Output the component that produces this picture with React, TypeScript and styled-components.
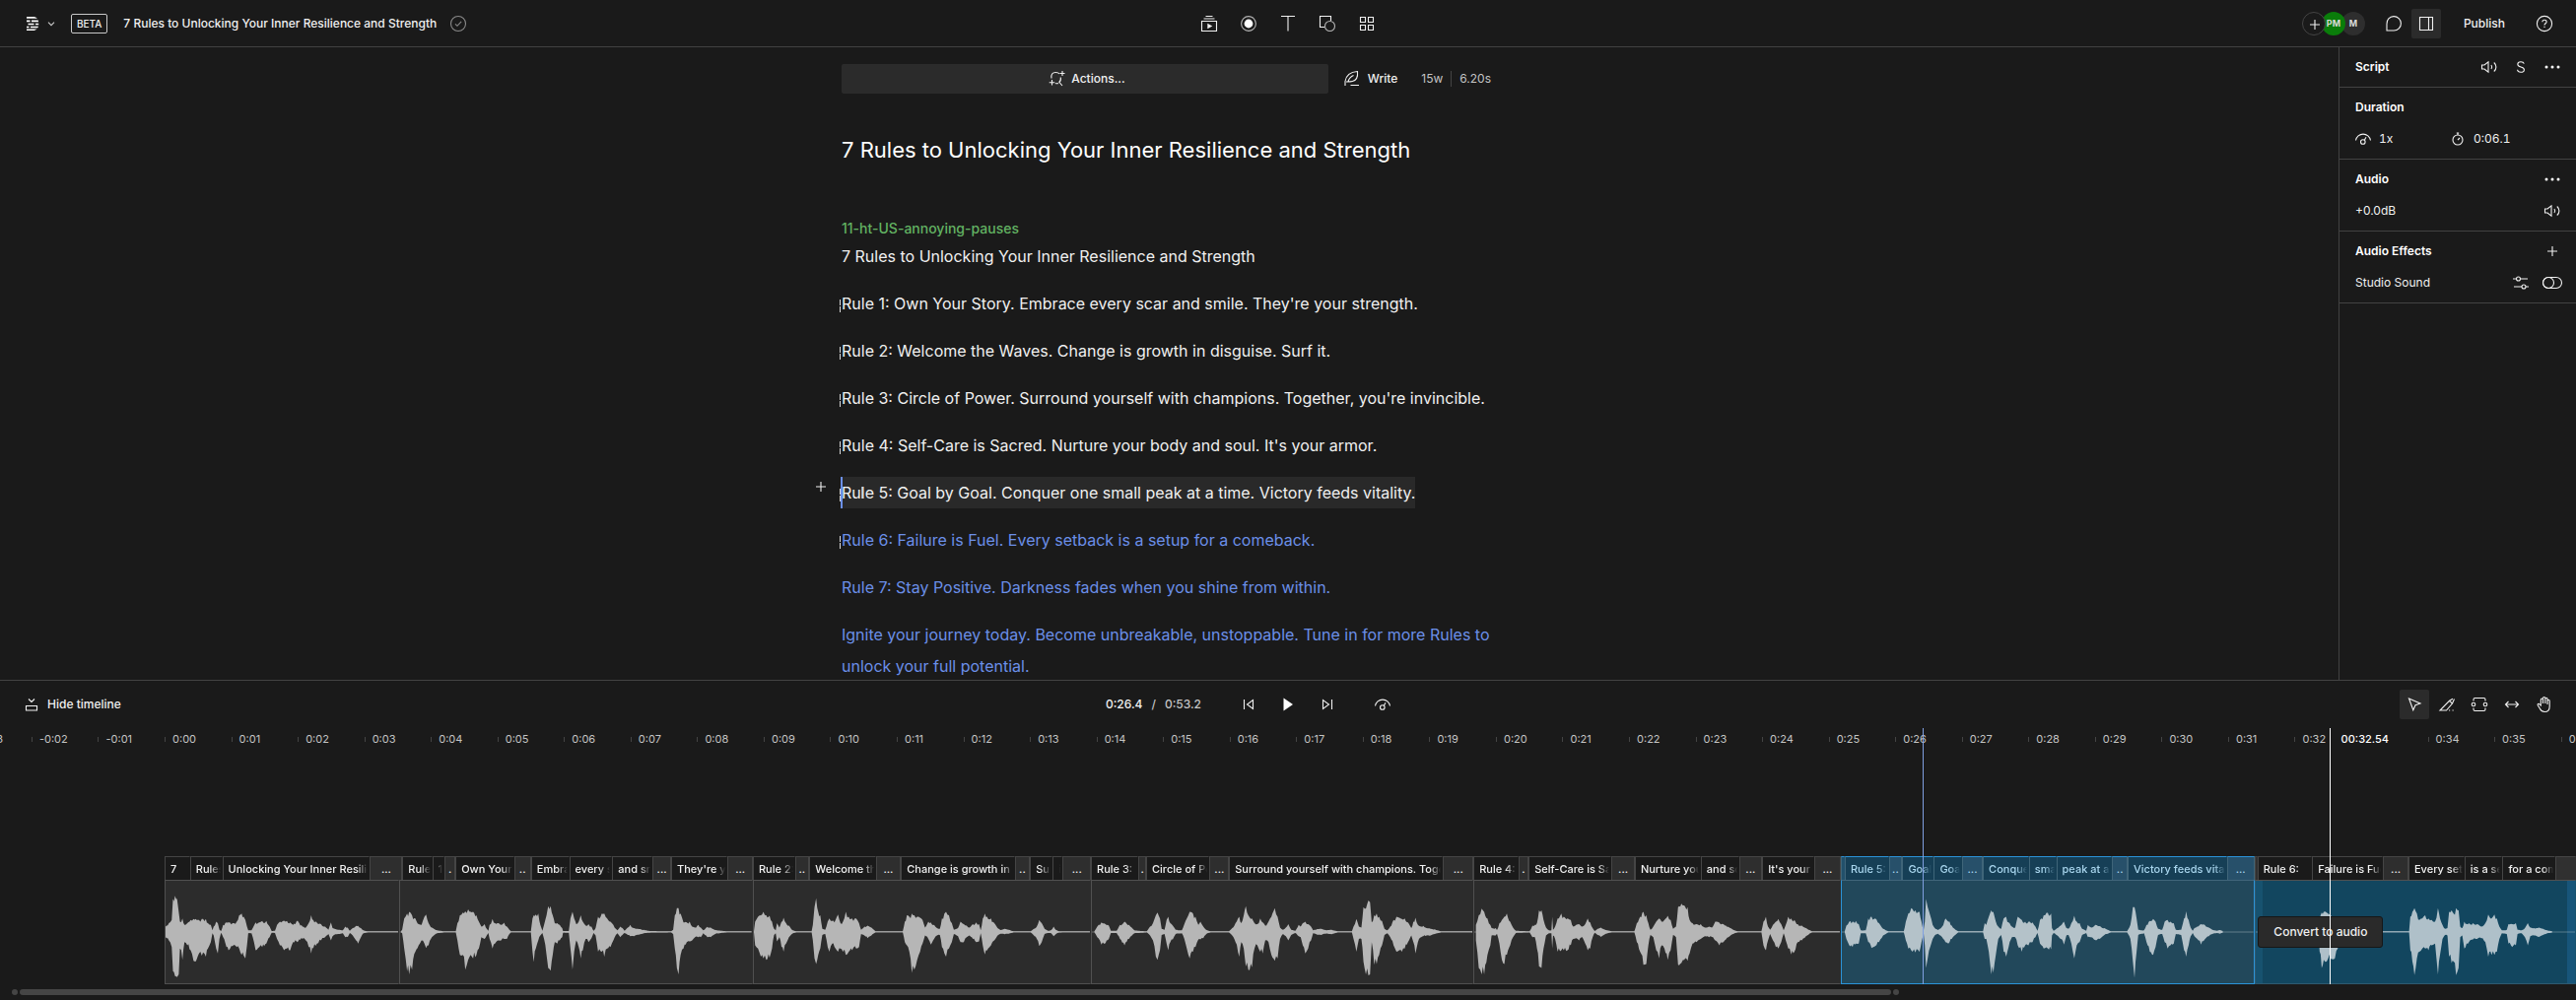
import React from "react";
import styled, { createGlobalStyle, css } from "styled-components";

/* ---------- theme ---------- */

const color = {
  bg: "#1a1a1a",
  raised: "#2b2b2b",
  line: "#424242",
  text: "#f0f0f0",
  muted: "#c4c4c4",
  link: "#6b8fe8",
  green: "#62b262",
  select: "#2b93d8",
};

const GlobalStyle = createGlobalStyle`
  *, *::before, *::after { box-sizing: border-box; }
  html, body { margin: 0; background: ${color.bg}; }
  body {
    font-family: Inter, "Liberation Sans", sans-serif;
    font-size: 12px;
    line-height: 16px;
    color: ${color.text};
  }
  h1, h2, p { margin: 0; font: inherit; }
  button {
    margin: 0; padding: 0; border: 0; background: none;
    color: inherit; font: inherit; cursor: pointer;
  }
`;

/* ---------- icons ---------- */

const Svg = styled.svg<{ $size?: number }>`
  width: ${(p) => p.$size ?? 24}px;
  height: ${(p) => p.$size ?? 24}px;
  flex: none;
  fill: none;
  stroke: currentColor;
  stroke-width: 1.1;
  display: block;
`;

const icons = {
  logo: (
    <g fill="#fff" stroke="none">
      <path d="M7 5h6.500c2 0 3.300.7 4.300 1.700H7z" />
      <path d="M7 8.600h3.500v1.700H7zM12 8.600h6.700l.4 1.700H12z" />
      <path d="M8.500 11.800h6v1.500h-6zM16 11.800h3.200v1.500H16z" />
      <path d="M7 14.700h2.500v1.500H7zM11 14.700h8l-.7 1.500H11z" />
      <path d="M7 17.500h10.500c-1 .9-2.300 1.500-4 1.500H7z" />
    </g>
  ),
  chevron: <path d="m7.500 10 4.500 4.500 4.500-4.500" stroke="#c8c8c8" strokeWidth="1.700" />,
  check: (
    <g stroke="#8a8a8a">
      <circle cx="12" cy="12" r="7.500" />
      <path d="m9 12.300 2 2 4.200-4.400" />
    </g>
  ),
  media: (
    <>
      <path d="M4.500 9.500h15v10h-15zM6.500 7h11M8.500 4.500h7" />
      <path d="m10.300 11.700 5 2.800-5 2.800z" fill="currentColor" stroke="none" />
    </>
  ),
  record: (
    <>
      <circle cx="12" cy="12" r="7.400" stroke="#b5b5b5" />
      <circle cx="12" cy="12" r="4.400" fill="#fff" stroke="none" />
    </>
  ),
  text: <path d="M5 4.500h14M12 4.500v15" />,
  shapes: (
    <>
      <path d="M9 15.500H4.500v-11h11V9" />
      <circle cx="14.500" cy="14.500" r="5" stroke="#b5b5b5" />
    </>
  ),
  grid: <path d="M5.500 5.500h5v5h-5zM13.500 5.500h5v5h-5zM5.500 13.500h5v5h-5zM13.500 13.500h5v5h-5z" />,
  plus: <path d="M12 7v10M7 12h10" />,
  chat: <path d="M5 19v-6.800a7.200 7.200 0 1 1 7.200 6.800z" />,
  panel: <path d="M5.500 5.500h13v13h-13zM14.500 5.500v13" />,
  help: (
    <>
      <circle cx="12" cy="12" r="7.600" />
      <path d="M9.900 10.300c0-1.300.9-2 2.100-2s2.100.8 2.100 1.900c0 1.500-2.100 1.600-2.100 3.200M12 14.700v1.300" />
    </>
  ),
  speaker: (
    <path d="M4.500 10v4H7l4 3.200V6.800L7 10zM14 10c.8 1.200.8 2.800 0 4M16.800 7.500c2.800 2.600 2.800 6.400 0 9" />
  ),
  solo: <path d="M15.300 8.700C14.900 7.300 13.700 6.700 12 6.700c-1.900 0-3.200.9-3.200 2.500 0 3.700 6.600 1.800 6.600 5.500 0 1.600-1.400 2.600-3.400 2.600-1.900 0-3.300-.9-3.500-2.500" />,
  dots: (
    <g fill="#fff" stroke="none">
      <circle cx="6" cy="12" r="1.500" />
      <circle cx="12" cy="12" r="1.500" />
      <circle cx="18" cy="12" r="1.500" />
    </g>
  ),
  speed: (
    <>
      <path d="M4.500 13.500a7.600 7.600 0 0 1 15 0" />
      <circle cx="11.800" cy="15" r="2.300" />
      <path d="m13.300 13.200 1.700-2.900" />
    </>
  ),
  stopwatch: (
    <>
      <circle cx="12" cy="13" r="5" />
      <path d="M10.800 6h2.400M12 6v2M12 13l2-2" />
    </>
  ),
  sliders: (
    <>
      <path d="M4 8h3.500M11.500 8H19M5 16h8M17 16h3" />
      <circle cx="9.500" cy="8" r="2" />
      <circle cx="15" cy="16" r="2" />
    </>
  ),
  toggle: (
    <>
      <rect x="2.500" y="6.500" width="19" height="11" rx="5.500" />
      <circle cx="8" cy="12" r="5.500" />
    </>
  ),
  actions: (
    <>
      <path d="M7 11.500c-.8-4 1-6 4.300-6 1.800 0 3 .4 3.700 1.500M16.300 10.500c.4 2.500-.3 4.300-1.800 5.300M15 15.500l3 3.500M11 16.500c1 .4 2 .4 3 0" />
      <path d="M18 4v5M15.500 6.500h5M7.500 13v5.500M4.700 15.700h5.600" />
    </>
  ),
  write: (
    <path d="M5 19v-4.500C6 8.500 10 5 17.500 4.500c.5 5-1 9-5 10-2.500.6-5 .5-6.500.5M8 14.500c1-3 3-5 5.500-6M10.500 18.500h8.500" />
  ),
  hide: <path d="M6.500 13.500h11v4.500h-11zM9 6.500l3 3 3-3" />,
  prev: <path d="M7.500 7v10M16.500 7.500v9l-6-4.500z" />,
  next: <path d="M16.500 7v10M7.500 7.500v9l6-4.500z" />,
  play: <path d="M7.500 5.500v13l9.500-6.500z" fill="#fff" stroke="none" />,
  cursor: <path d="m6.500 6 11.500 5-5 1.800-2.200 5z" />,
  blade: (
    <>
      <path d="M5 18h6.500l6-7-3-2.700zM14.500 8.300l3.500-2M17.500 11l2-4.500" />
      <path d="M14 18h1.200M17.500 18h1.200" />
    </>
  ),
  range: (
    <>
      <path d="M6 8.500V7q0-1.500 1.500-1.500h9Q18 5.500 18 7v1.500M6 15.500V17q0 1.500 1.500 1.500h9Q18 18.500 18 17v-1.500" />
      <circle cx="6" cy="12" r="1.800" />
      <circle cx="18" cy="12" r="1.800" />
    </>
  ),
  slip: <path d="M6 12h12M8.500 9 5.500 12l3 3M15.500 9l3 3-3 3" />,
  hand: (
    <path d="M8.300 13V7.300c0-1.700 2.200-1.700 2.200 0V11 5.800c0-1.700 2.300-1.700 2.300 0V11 6.500c0-1.700 2.200-1.700 2.200 0V12 8.500c0-1.600 2.200-1.600 2.200 0V14c0 3.500-2 5.500-5 5.500-2.500 0-3.700-1-4.700-3l-2.300-3.700c-.6-1.200 1-2 1.800-1z" />
  ),
};

type IconName = keyof typeof icons;

function Icon({ name, size }: { name: IconName; size?: number }) {
  return (
    <Svg viewBox="0 0 24 24" $size={size} aria-hidden="true">
      {icons[name]}
    </Svg>
  );
}

/* ---------- shared controls ---------- */

const IconButton = styled.button<{ $active?: boolean; $width?: number }>`
  display: grid;
  place-items: center;
  width: ${(p) => p.$width ?? 30}px;
  height: 30px;
  border-radius: 2px;
  ${(p) => p.$active && css`background: ${color.raised};`}
`;

const Row = styled.div<{ $gap?: number }>`
  display: flex;
  align-items: center;
  gap: ${(p) => p.$gap ?? 0}px;
`;

/* ---------- shell ---------- */

const Shell = styled.div`
  display: flex;
  flex-direction: column;
  height: 100vh;
  min-height: 640px;
  overflow: hidden;
`;

const TopBar = styled.header`
  display: grid;
  grid-template-columns: 1fr auto 1fr;
  align-items: center;
  height: 48px;
  flex: none;
  padding: 0 17px;
  border-bottom: 1px solid ${color.line};
`;

const TopCenter = styled.nav`
  display: flex;
  gap: 10px;
`;

const TopRight = styled(Row)`
  justify-content: flex-end;
  gap: 3px;
`;

const MenuButton = styled.button`
  display: flex;
  align-items: center;
  padding-left: 3px;
`;

const Beta = styled.span`
  margin: 0 16px 0 12px;
  padding: 0 5px;
  border: 1px solid #c8c8c8;
  border-radius: 2px;
  font-size: 10px;
  font-weight: 500;
  line-height: 18px;
`;

const ProjectName = styled.span`
  margin-right: 10px;
  font-weight: 500;
`;

const Avatars = styled.div`
  display: flex;
  margin-right: 11px;
`;

const Avatar = styled.span<{ $bg: string; $level: number }>`
  position: relative;
  z-index: ${(p) => p.$level};
  display: grid;
  place-items: center;
  width: 24px;
  height: 24px;
  margin-left: -4px;
  border-radius: 50%;
  background: ${(p) => p.$bg};
  color: #d8d8d8;
  font-size: 9px;
  font-weight: 700;
`;

const AddPerson = styled.button`
  position: relative;
  z-index: 3;
  display: grid;
  place-items: center;
  width: 24px;
  height: 24px;
  border: 1px solid #444;
  border-radius: 50%;
  background: ${color.bg};
`;

const Publish = styled.button`
  padding: 0 22px 0 20px;
  height: 30px;
  font-weight: 500;
`;

const Main = styled.main`
  display: flex;
  flex: 1;
  min-height: 0;
`;

/* ---------- script editor ---------- */

const Editor = styled.section`
  flex: 1;
  min-width: 0;
  overflow: hidden;
  padding-top: 17px;
`;

const Column = styled.div`
  width: 100%;
  max-width: 665px;
  margin: 0 auto;
`;

const ActionsRow = styled.div`
  display: flex;
  align-items: center;
  height: 30px;
  margin-bottom: 41px;
  color: ${color.muted};
`;

const ActionsButton = styled.button`
  display: flex;
  align-items: center;
  justify-content: center;
  gap: 3px;
  flex: 1;
  height: 30px;
  border-radius: 2px;
  background: ${color.raised};
  color: ${color.text};
  font-weight: 500;
`;

const WriteButton = styled.button`
  display: flex;
  align-items: center;
  gap: 4px;
  margin: 0 24px 0 12px;
  color: ${color.text};
  font-weight: 500;
`;

const Seconds = styled.span`
  margin: 0 6px 0 8px;
  padding-left: 8px;
  border-left: 1px solid #444;
`;

const Title = styled.h1`
  margin-bottom: 52px;
  font-size: 22px;
  line-height: 32px;
  color: #fff;
`;

const Speaker = styled.h2`
  font-size: 14px;
  line-height: 24px;
  font-weight: 500;
  color: ${color.green};
`;

const Line = styled.p<{ $synth?: boolean }>`
  position: relative;
  margin-bottom: 16px;
  font-size: 16px;
  line-height: 32px;
  color: ${(p) => (p.$synth ? color.link : color.text)};
`;

const Highlight = styled.span`
  display: inline-block;
  background: #292929;
`;

const GapMark = styled.span`
  position: absolute;
  left: -2px;
  top: 12px;
  width: 1px;
  height: 13px;
  background: linear-gradient(#d8d8d8 45%, transparent 45% 55%, #d8d8d8 55%);
`;

const Caret = styled.span`
  position: absolute;
  left: -1px;
  top: 0;
  width: 2px;
  height: 32px;
  background: ${color.link};
`;

const WordCaret = styled.span`
  display: inline-block;
  width: 1px;
  height: 12px;
  margin-right: -1px;
  background: #9a9a9a;
`;

const AddBlock = styled.button`
  position: absolute;
  left: -33px;
  top: -2px;
`;

/* ---------- inspector ---------- */

const Inspector = styled.aside`
  width: 241px;
  flex: none;
  border-left: 1px solid ${color.line};
`;

const Panel = styled.section<{ $single?: boolean }>`
  padding: 0 12px ${(p) => (p.$single ? 0 : 8)}px 16px;
  border-bottom: 1px solid ${color.line};
`;

const PanelHead = styled.div`
  display: flex;
  align-items: center;
  justify-content: space-between;
  height: 40px;
  font-size: 12px;

  h2 { font-weight: 600; color: #fff; }
`;

const PanelRow = styled.div`
  display: flex;
  align-items: center;
  justify-content: space-between;
  height: 24px;
`;

const Fields = styled.div`
  display: grid;
  grid-template-columns: 96px 1fr;
  align-items: center;
  height: 24px;
  margin-left: -4px;
  font-variant-numeric: tabular-nums;
`;

const Toggle = styled.label`
  position: relative;
  display: block;

  input {
    position: absolute;
    inset: 0;
    margin: 0;
    opacity: 0;
  }
`;

/* ---------- timeline ---------- */

const Timeline = styled.section`
  flex: none;
  border-top: 1px solid ${color.line};
  overflow: hidden;
`;

const TimelineBar = styled.div`
  display: grid;
  grid-template-columns: 1fr auto 1fr;
  align-items: center;
  height: 48px;
  padding: 0 17px;
`;

const Spread = styled.div`
  display: flex;
  align-items: center;
  justify-content: space-between;
`;

const HideButton = styled.button`
  display: flex;
  align-items: center;
  gap: 4px;
  padding-left: 3px;
  font-weight: 500;
`;

const Clock = styled.div`
  display: flex;
  gap: 9px;
  margin-right: 28px;
  color: ${color.muted};
  font-weight: 500;

  strong { color: ${color.text}; font-weight: 500; }
`;

const Transport = styled.div`
  display: flex;
`;

const SpeedButton = styled(IconButton)`
  margin-left: 21px;
`;

const Stage = styled.div`
  position: relative;
`;

const Ruler = styled.div<{ $columns: string }>`
  display: grid;
  grid-template-columns: ${(p) => p.$columns};
  height: 22px;
  margin-bottom: 108px;
  font-size: 11px;
  color: ${color.muted};
`;

const Mark = styled.div<{ $end?: boolean }>`
  display: flex;
  align-items: center;
  justify-content: ${(p) => (p.$end ? "flex-end" : "flex-start")};
  gap: 7px;
  min-width: 0;
  padding-right: ${(p) => (p.$end ? 29 : 0)}px;
  overflow: hidden;
  white-space: nowrap;

  &::before {
    content: "";
    flex: none;
    width: 1px;
    height: 5px;
    background: #444;
  }
`;

const Track = styled.div<{ $columns: string; $height: number }>`
  display: grid;
  grid-template-columns: ${(p) => p.$columns};
  grid-template-rows: minmax(0, 1fr);
  height: ${(p) => p.$height}px;
`;

type Tone = "plain" | "selected" | "fresh";

const wordTones = {
  plain: { bg: color.bg, pause: "#2e2e2e", line: "#454545", text: color.text },
  fresh: { bg: color.bg, pause: "#2e2e2e", line: "#454545", text: color.text },
  selected: { bg: "#163f56", pause: "#27506a", line: "#3f6579", text: "#a9d6ee" },
};

const Word = styled.span<{ $tone: Tone; $pause?: boolean; $blank?: boolean }>`
  min-width: 0;
  display: flex;
  align-items: center;
  justify-content: ${(p) => (p.$pause ? "center" : "flex-start")};
  overflow: hidden;
  white-space: nowrap;
  font-size: 11px;
  font-weight: 500;
  color: ${(p) => wordTones[p.$tone].text};
  background: ${(p) =>
    p.$blank ? (p.$tone === "selected" ? "#22506b" : "#303030") : p.$pause ? wordTones[p.$tone].pause : wordTones[p.$tone].bg};
  border: 1px solid ${(p) => wordTones[p.$tone].line};
  border-top-color: ${(p) => (p.$tone === "selected" ? color.select : "#454545")};
  border-right-color: ${(p) => (p.$pause ? wordTones[p.$tone].line : "transparent")};
  border-bottom: 0;
`;

const WordText = styled.span`
  width: 100%;
  padding-left: 5px;
  overflow: hidden;
  mask-image: linear-gradient(to right, #000 calc(100% - 12px), transparent calc(100% - 1px));
`;

const clipTones = {
  plain: { bg: "#2c2c2c", wave: "#b6b6b6", line: "#505050" },
  selected: { bg: "#22485b", wave: "#b4c2c9", line: color.select },
  fresh: { bg: "#12465f", wave: "#afc0c9", line: "#2f5a70" },
};

const Clip = styled.div<{ $tone: Tone }>`
  min-width: 0;
  color: ${(p) => clipTones[p.$tone].wave};
  background: ${(p) => clipTones[p.$tone].bg};
  border: 1px solid ${(p) => clipTones[p.$tone].line};
  border-top-color: ${(p) => (p.$tone === "selected" ? "#41657a" : "#505050")};
  border-right-color: ${(p) => (p.$tone === "selected" ? color.select : "transparent")};
  ${(p) =>
    p.$tone === "fresh" &&
    css`background: linear-gradient(to right, #17526f 7px, transparent 7px calc(100% - 8px), #17557a calc(100% - 8px)), #12465f;`}
`;

const Wave = styled.svg`
  display: block;
  width: 100%;
  height: 100%;
`;

const Needle = styled.div<{ $tint: string }>`
  position: absolute;
  z-index: 2;
  top: 0;
  bottom: 0;
  width: 1px;
  background: ${(p) => p.$tint};
`;

const HoverTime = styled.span`
  position: absolute;
  top: 3px;
  left: 12px;
  font-size: 11px;
  font-weight: 500;
  color: #fff;
`;

const Tooltip = styled.div`
  position: absolute;
  z-index: 1;
  bottom: 37px;
  padding: 7px 15px;
  border: 1px solid #161616;
  border-radius: 3px;
  background: #2a2a2a;
  white-space: nowrap;
  font-weight: 500;
`;

const ScrollRow = styled.div`
  display: grid;
  grid-template-columns: 6px 1902fr 6px 686fr;
  gap: 2px;
  height: 16px;
  padding: 5px 0 5px 12px;
`;

const ScrollPart = styled.span`
  border-radius: 3px;
  background: #454545;
`;

/* ---------- timeline data ---------- */

const TRACK_START = 397;
const TRACK_END = 6210;
const VIEW_START = -2.473;
const VIEW_SPAN = 38.7;

const fr = (parts: number[]) => parts.map((n) => `minmax(0, ${n}fr)`).join(" ");
const atTime = (t: number) => `${((t - VIEW_START) / VIEW_SPAN) * 100}%`;

const clips: { start: number; tone: Tone }[] = [
  { start: 397, tone: "plain" },
  { start: 963, tone: "plain" },
  { start: 1815, tone: "plain" },
  { start: 2630, tone: "plain" },
  { start: 3552, tone: "plain" },
  { start: 4438, tone: "selected" },
  { start: 5435, tone: "fresh" },
];

// Start sample and the words spoken there; dots stand for a pause.
const words: [number, string][] = [
  [397, "7"], [458, "Rules"], [536, "Unlocking Your Inner Resilie"], [892, "..."],
  [970, "Rule"], [1042, "1:"], [1072, "."], [1098, "Own Your"], [1239, ".."], [1280, "Embrac"],
  [1372, "every s"], [1476, "and sm"], [1573, "..."], [1618, "They're yo"], [1754, "..."],
  [1815, "Rule 2:"], [1916, ".."], [1951, "Welcome th"], [2111, "..."], [2172, "Change is growth in d"],
  [2446, ".."], [2483, "Surf"], [2538, "it"], [2562, "..."],
  [2630, "Rule 3:"], [2745, "."], [2763, "Circle of Po"], [2916, "..."],
  [2963, "Surround yourself with champions. Toget"], [3479, "..."],
  [3552, "Rule 4:"], [3660, "."], [3685, "Self-Care is Sac"], [3885, "..."], [3941, "Nurture you"],
  [4100, "and so"], [4192, "..."], [4248, "It's your"], [4373, "..."],
  [4438, ""], [4447, "Rule 5:"], [4553, ".."], [4586, "Goal"], [4662, "Goal"], [4730, "..."],
  [4780, "Conque"], [4891, "smal"], [4957, "peak at a"], [5092, ".."], [5129, "Victory feeds vital"], [5368, "..."],
  [5435, ""], [5442, "Rule 6:"], [5574, "Failure is Fue"], [5745, "..."], [5806, "Every set"],
  [5941, "is a set"], [6033, "for a com"], [6159, ""],
];

// Envelope blocks: offset, then "position rise fall" triples.
const envelope: [number, string][] = [
  [0, "397 15 15,405 25 25,412 35 45,415 100 120,420 110 135,425 100 138,429 60 130,432 30 50,438 40 85,443 20 30,450 25 40,458 35 55,465 38 88,470 38 90,475 35 75,485 38 72,495 38 75,500 25 50,507 20 30,511 3 3,514 15 10,520 30 50,524 25 65,528 5 20,532 1 1,537 20 15,545 28 45,550 28 55,560 25 42,570 30 45,576 50 50,582 55 70,587 45 72,591 35 80,595 15 40,598 3 3,606 3 3,612 18 30,616 28 55,625 28 45,632 32 45,637 25 42,642 32 35,650 15 15,655 1 1,663 2 2,668 20 20,675 30 40,685 33 55,692 32 50,700 28 55,707 20 30,718 33 30,722 25 22,730 15 20,738 12 25,745 25 45,751 50 65,756 35 50,765 27 35,775 22 25,785 15 15,793 5 5,799 28 25,803 10 12,810 7 6,820 5 5,828 3 3,834 15 15,840 12 14,845 2 2,852 10 10,860 17 25,865 17 35,872 10 15,878 3 3,890 0 0,965 0 0,968 5 3,973 40 50,980 55 120,985 60 130,992 50 115,1000 40 60,1008 22 40,1015 20 25,1022 45 35,1026 52 48,1032 25 40,1040 12 15,1050 4 4,1070 0 0,1098 0 0,1102 25 25,1108 50 70,1115 58 70,1121 62 115,1128 68 85,1134 60 70,1140 60 80,1148 50 70,1154 30 50,1160 15 15,1168 22 20,1173 8 10,1177 2 2,1180 20 20,1187 38 50,1193 25 35,1202 25 25,1208 20 25,1215 27 20,1222 15 20,1228 5 5,1232 0 0,1280 0 0,1284 40 60,1287 50 92,1292 52 50,1298 55 25,1303 20 10,1308 2 2,1312 20 20,1318 50 70,1322 78 110,1328 78 118,1333 50 70,1338 25 30,1344 25 35,1350 20 25,1356 10 15,1358 1 1,1372 1 1,1376 40 50,1381 60 115,1385 40 60,1390 22 25,1396 30 45,1401 50 80,1406 30 55,1413 18 20,1420 22 30,1427 15 18,1432 2 2,1437 10 10,1443 45 60,1452 55 60,1458 55 75,1465 40 50,1473 30 45,1480 20 25,1486 8 8,1490 3 3,1497 15 15,1502 10 8,1507 2 2,1515 12 8,1521 20 12,1530 10 12,1545 7 6,1560 3 2,1568 1 1"],
  [1568, "52 0 0,57 5 5,61 50 50,66 72 110,70 72 130,75 55 70,82 28 50,90 28 30,97 30 28,103 15 25,110 12 15,118 20 15,124 12 15,130 3 3,140 14 15,148 12 15,160 4 4,188 0 0,247 0 0,250 30 40,257 45 50,264 50 75,270 60 80,277 50 85,285 48 78,291 30 50,296 8 8,300 3 3,303 25 28,309 12 15,314 30 45,319 42 60,325 25 35,332 18 15,340 4 4,350 0 0,387 0 0,390 20 25,394 75 80,398 102 98,403 60 70,408 50 50,413 8 8,420 5 5,426 30 45,430 40 60,437 32 35,445 35 50,451 52 60,457 25 50,463 30 60,470 60 70,477 45 60,485 40 55,495 40 50,502 25 45,507 5 5,515 15 10,523 18 18,532 12 10,542 0 0,608 0 0,613 30 30,618 50 40,624 45 60,630 55 125,636 50 115,643 45 85,650 42 60,656 35 35,662 12 10,670 30 20,676 28 38,684 20 20,691 10 10,698 8 8,703 40 45,709 55 65,713 60 75,720 50 50,727 25 30,732 5 5,742 10 12,748 30 30,756 22 30,763 18 15,770 12 10,778 22 20,786 28 30,793 22 28,797 3 3,802 40 40,807 55 68,815 38 50,822 40 40,830 25 25,838 10 10,845 4 4,855 8 6,865 5 4,877 0 0,918 0 0,925 7 8,933 15 20,939 35 42,945 25 30,952 8 5,960 2 2,968 4 3,974 15 12,979 5 6,985 1 1,995 0 0,1068 0 0,1075 15 15,1085 28 38,1095 22 33,1103 18 20,1108 2 2,1122 2 2,1130 20 20,1141 30 40,1152 20 20,1165 3 3,1195 0 0,1203 15 10,1210 25 25,1217 50 75,1221 58 85,1227 40 55,1231 8 8,1238 5 5,1243 35 35,1247 45 55,1252 25 30,1258 18 22,1265 5 5,1280 3 3,1286 22 20,1292 40 50,1299 60 80,1307 55 60,1313 45 45,1320 20 22,1325 30 22,1332 15 18,1340 4 4,1350 0 0,1394 0 0,1402 10 10,1410 25 30,1419 45 75,1424 25 30,1430 50 50,1435 78 105,1441 50 115,1450 40 108,1456 25 50,1463 22 40,1470 40 60,1476 28 65,1482 18 25,1490 30 30,1497 45 70,1505 72 88,1512 45 80,1518 12 20,1525 5 5,1532 12 12,1538 22 25,1545 5 8,1555 2 2,1563 20 12"],
  [3136, "0 15 15,5 25 40,11 30 65,18 22 50,25 15 25,30 3 3,40 7 7,50 8 8,60 4 4,75 5 6,90 0 0,124 0 0,128 15 20,135 38 60,141 15 20,147 12 20,152 75 90,158 70 130,164 95 133,168 90 130,172 28 30,178 50 100,184 55 98,190 45 70,197 32 40,203 8 8,210 3 3,217 15 15,225 35 40,232 45 60,239 42 55,245 38 60,252 40 50,260 28 30,268 10 10,273 30 30,278 42 65,284 20 30,292 15 15,297 17 12,305 10 10,315 8 10,325 6 5,340 0 0,415 0 0,420 20 25,427 50 110,434 70 130,440 60 130,448 40 70,455 20 40,458 10 10,468 10 10,471 4 4,477 25 35,483 35 85,489 45 98,495 55 70,503 30 40,510 12 15,517 2 2,550 0 0,557 18 15,563 20 15,568 25 50,573 65 105,579 65 110,584 35 50,590 12 10,597 3 3,603 3 3,605 45 50,607 5 10,612 15 20,618 40 60,627 55 55,633 45 55,642 40 55,650 35 40,656 15 20,663 20 18,670 22 25,678 15 15,685 22 35,691 40 55,697 28 50,703 10 15,708 1 1,715 8 8,723 12 14,735 4 4,750 0 0,804 0 0,810 25 30,818 45 60,826 60 100,833 50 98,838 25 40,843 5 8,850 15 15,857 30 55,864 40 80,870 30 40,877 35 50,885 48 85,892 35 55,898 8 8,905 15 15,910 75 100,918 85 95,925 80 85,933 75 88,938 35 65,945 25 35,955 22 30,965 22 20,975 12 12,985 15 15,992 12 14,1000 30 25,1010 27 40,1020 22 30,1032 14 15,1045 4 4,1055 0 0,1112 0 0,1117 30 40,1123 45 55,1128 15 25,1133 5 5,1140 20 25,1147 30 45,1153 38 50,1160 22 30,1166 3 3,1171 20 25,1177 45 50,1184 40 68,1192 35 60,1200 22 30,1210 18 25,1220 10 12,1235 0 0,1309 0 0,1313 18 20,1320 30 40,1328 30 45,1336 32 35,1343 22 35,1348 3 3,1360 3 3,1366 40 30,1374 45 48,1383 40 42,1392 25 30,1402 8 10,1415 0 0,1452 0 0,1457 30 25,1463 55 50,1470 72 55,1480 65 62,1490 60 60,1495 30 30,1500 3 3,1503 30 40,1506 100 110,1510 75 80,1516 50 45,1522 20 20,1527 10 10,1535 4 4,1545 15 15,1553 40 30,1560 30 35"],
  [4642, "57 30 30,65 12 15,78 0 0,138 0 0,142 25 20,146 20 20,152 45 60,158 65 130,163 60 125,169 30 70,175 15 20,182 8 8,188 40 60,194 45 75,200 28 45,208 15 15,216 12 15,222 45 40,232 35 60,240 30 40,248 30 40,258 28 30,265 15 15,270 2 2,276 35 35,285 50 50,295 57 50,303 55 52,305 10 10,309 2 2,318 10 10,326 18 20,334 30 38,340 10 10,345 8 8,352 25 35,359 48 80,365 30 40,372 25 30,378 8 8,388 2 2,392 20 15,400 12 15,410 20 24,420 16 20,432 10 8,448 0 0,487 0 0,495 20 20,501 75 90,505 75 140,510 40 60,514 5 8,528 3 3,534 20 30,542 32 60,550 38 70,556 30 45,562 8 8,572 5 5,578 30 30,585 35 50,592 30 40,600 25 35,605 5 5,618 5 8,625 40 55,630 62 75,636 35 40,641 12 12,646 2 2,650 10 12,657 15 20,666 22 38,675 20 22,685 12 12,695 4 4,705 2 2,712 4 4,722 0 0,945 0 0,948 40 60,953 58 110,958 60 85,965 58 90,975 50 82,985 45 80,992 30 50,996 0 0,1165 0 0,1168 45 55,1173 60 90,1178 72 132,1184 55 80,1190 35 60,1197 40 50,1204 50 50,1212 40 55,1220 35 40,1228 30 35,1235 72 130,1240 40 70,1246 20 20,1252 8 8,1258 10 10,1262 60 75,1268 65 95,1273 55 90,1279 72 132,1285 65 110,1289 15 15,1294 10 10,1299 30 50,1310 25 30,1320 25 22,1330 22 20,1340 15 18,1350 25 30,1357 52 75,1365 40 70,1372 52 70,1378 40 60,1384 15 20,1390 3 3,1402 5 5,1406 22 35,1415 22 45,1424 25 40,1428 5 5,1438 3 3,1446 10 15,1453 25 40,1459 12 12,1468 10 10,1480 12 14,1490 8 8,1500 3 3,1515 0 0"],
];

const points = envelope.flatMap(([offset, block]) =>
  block.split(",").map((triple) => {
    const [x, rise, fall] = triple.split(" ").map(Number);
    return { x: x + offset, rise, fall };
  }),
);

// Audio is never smooth: roughen the envelope between its control points.
const rough = (n: number) => {
  const v = Math.sin(n * 12.9898) * 43758.5453;
  return 0.8 + 0.25 * (v - Math.floor(v));
};

function wavePath(start: number, end: number) {
  const top: string[] = [];
  const bottom: string[] = [];
  for (let i = 0; i < points.length - 1; i++) {
    const a = points[i];
    const b = points[i + 1];
    if (a.x < start || b.x > end + 8) continue;
    const steps = Math.max(1, Math.round((b.x - a.x) / 3));
    for (let s = 0; s < steps; s++) {
      const k = s / steps;
      const x = a.x + (b.x - a.x) * k;
      const rise = (a.rise + (b.rise - a.rise) * k) * (s ? rough(x) : 1);
      const fall = (a.fall + (b.fall - a.fall) * k) * (s ? rough(x + 7) : 1);
      top.push(`${x.toFixed(1)} ${(-rise - 2).toFixed(1)}`);
      bottom.unshift(`${x.toFixed(1)} ${(fall + 1).toFixed(1)}`);
    }
  }
  return `M${top.concat(bottom).join("L")}Z`;
}

/* ---------- timeline parts ---------- */

function TimeRuler() {
  const seconds = Array.from({ length: 39 }, (_, i) => i - 2);
  const columns = fr([473, ...seconds.map((s) => (s === 36 ? 227 : 1000))]);
  return (
    <Ruler $columns={columns}>
      <Mark $end>-0:03</Mark>
      {seconds.map((s) => (
        <Mark key={s}>
          {s === 33 ? "" : `${s < 0 ? "-" : ""}0:${String(Math.abs(s)).padStart(2, "0")}`}
        </Mark>
      ))}
    </Ruler>
  );
}

function WordTrack() {
  const widths = words.map(([start], i) => (words[i + 1]?.[0] ?? TRACK_END) - start);
  return (
    <Track $columns={fr([TRACK_START, ...widths])} $height={24}>
      <span />
      {words.map(([start, text]) => {
        const pause = /^\.+$/.test(text);
        const tone: Tone = start >= 4438 && start < 5435 ? "selected" : "plain";
        return (
          <Word key={start} $tone={tone} $pause={pause} $blank={text === ""}>
            {pause ? text : text && <WordText>{text}</WordText>}
          </Word>
        );
      })}
    </Track>
  );
}

function ClipTrack() {
  const ends = clips.map((_, i) => clips[i + 1]?.start ?? TRACK_END);
  return (
    <Track $columns={fr([TRACK_START, ...clips.map((c, i) => ends[i] - c.start)])} $height={106}>
      <span />
      {clips.map((clip, i) => (
        <Clip key={clip.start} $tone={clip.tone}>
          <Wave viewBox={`${clip.start} -158 ${ends[i] - clip.start} 316`} preserveAspectRatio="none" aria-hidden="true">
            <path d={`M${clip.start} 0H${ends[i]}`} stroke="currentColor" strokeOpacity="0.3" strokeWidth="4" />
            <path d={wavePath(clip.start, ends[i])} fill="currentColor" />
          </Wave>
        </Clip>
      ))}
    </Track>
  );
}

/* ---------- page ---------- */

const rules = [
  "Rule 1: Own Your Story. Embrace every scar and smile. They're your strength.",
  "Rule 2: Welcome the Waves. Change is growth in disguise. Surf it.",
  "Rule 3: Circle of Power. Surround yourself with champions. Together, you're invincible.",
  "Rule 4: Self-Care is Sacred. Nurture your body and soul. It's your armor.",
];

const tools: [IconName, string][] = [
  ["cursor", "Select"],
  ["blade", "Blade"],
  ["range", "Range"],
  ["slip", "Slip"],
  ["hand", "Hand"],
];

const inserts: [IconName, string][] = [
  ["media", "Media"],
  ["record", "Record"],
  ["text", "Text"],
  ["shapes", "Shapes"],
  ["grid", "Templates"],
];

export default function App() {
  return (
    <Shell>
      <GlobalStyle />
      <TopBar>
        <Row>
          <MenuButton aria-label="Menu">
            <Icon name="logo" />
            <Icon name="chevron" size={16} />
          </MenuButton>
          <Beta>BETA</Beta>
          <ProjectName>7 Rules to Unlocking Your Inner Resilience and Strength</ProjectName>
          <Icon name="check" />
        </Row>
        <TopCenter>
          {inserts.map(([name, label]) => (
            <IconButton key={name} aria-label={label}>
              <Icon name={name} />
            </IconButton>
          ))}
        </TopCenter>
        <TopRight>
          <Avatars>
            <AddPerson aria-label="Invite">
              <Icon name="plus" />
            </AddPerson>
            <Avatar $bg="#0a7d0a" $level={2}>PM</Avatar>
            <Avatar $bg="#2e2e2e" $level={1}>M</Avatar>
          </Avatars>
          <IconButton aria-label="Comments">
            <Icon name="chat" />
          </IconButton>
          <IconButton $active aria-label="Inspector">
            <Icon name="panel" />
          </IconButton>
          <Publish>Publish</Publish>
          <IconButton aria-label="Help">
            <Icon name="help" />
          </IconButton>
        </TopRight>
      </TopBar>

      <Main>
        <Editor>
          <Column>
            <ActionsRow>
              <ActionsButton>
                <Icon name="actions" />
                Actions...
              </ActionsButton>
              <WriteButton>
                <Icon name="write" />
                Write
              </WriteButton>
              <span>15w</span>
              <Seconds>6.20s</Seconds>
            </ActionsRow>
            <Title>7 Rules to Unlocking Your Inner Resilience and Strength</Title>
            <Speaker>11-ht-US-annoying-pauses</Speaker>
            <Line>7 Rules to Unlocking Your Inner Resilience and Strength</Line>
            {rules.map((rule) => (
              <Line key={rule}>
                <GapMark />
                {rule}
              </Line>
            ))}
            <Line>
              <AddBlock aria-label="Add block">
                <Icon name="plus" />
              </AddBlock>
              <GapMark />
              <Highlight>
                Ru
                <WordCaret />
                le 5: Goal by Goal. Conquer one small peak at a time. Victory feeds vitality.
              </Highlight>
              <Caret />
            </Line>
            <Line $synth>
              <GapMark />
              Rule 6: Failure is Fuel. Every setback is a setup for a comeback.
            </Line>
            <Line $synth>Rule 7: Stay Positive. Darkness fades when you shine from within.</Line>
            <Line $synth>
              Ignite your journey today. Become unbreakable, unstoppable. Tune in for more Rules to unlock your full
              potential.
            </Line>
          </Column>
        </Editor>

        <Inspector>
          <Panel $single>
            <PanelHead>
              <h2>Script</h2>
              <Row $gap={8}>
                <button aria-label="Volume"><Icon name="speaker" /></button>
                <button aria-label="Solo"><Icon name="solo" /></button>
                <button aria-label="More"><Icon name="dots" /></button>
              </Row>
            </PanelHead>
          </Panel>
          <Panel>
            <PanelHead>
              <h2>Duration</h2>
            </PanelHead>
            <Fields>
              <Row $gap={4}>
                <Icon name="speed" />
                1x
              </Row>
              <Row $gap={4}>
                <Icon name="stopwatch" />
                0:06.1
              </Row>
            </Fields>
          </Panel>
          <Panel>
            <PanelHead>
              <h2>Audio</h2>
              <button aria-label="Audio options"><Icon name="dots" /></button>
            </PanelHead>
            <PanelRow>
              +0.0dB
              <button aria-label="Mute"><Icon name="speaker" /></button>
            </PanelRow>
          </Panel>
          <Panel>
            <PanelHead>
              <h2>Audio Effects</h2>
              <button aria-label="Add effect"><Icon name="plus" /></button>
            </PanelHead>
            <PanelRow>
              Studio Sound
              <Row $gap={8}>
                <button aria-label="Effect settings"><Icon name="sliders" /></button>
                <Toggle>
                  <input type="checkbox" aria-label="Studio Sound" />
                  <Icon name="toggle" />
                </Toggle>
              </Row>
            </PanelRow>
          </Panel>
        </Inspector>
      </Main>

      <Timeline>
        <TimelineBar>
          <Spread>
            <HideButton>
              <Icon name="hide" />
              Hide timeline
            </HideButton>
            <Clock>
              <strong>0:26.4</strong>
              <span>/</span>
              <span>0:53.2</span>
            </Clock>
          </Spread>
          <Transport>
            <IconButton $width={40} aria-label="Previous"><Icon name="prev" /></IconButton>
            <IconButton $width={40} aria-label="Play"><Icon name="play" /></IconButton>
            <IconButton $width={40} aria-label="Next"><Icon name="next" /></IconButton>
          </Transport>
          <Spread>
            <SpeedButton aria-label="Playback speed"><Icon name="speed" /></SpeedButton>
            <Row $gap={3}>
              {tools.map(([name, label], i) => (
                <IconButton key={name} $active={i === 0} aria-label={label}>
                  <Icon name={name} />
                </IconButton>
              ))}
            </Row>
          </Spread>
        </TimelineBar>
        <Stage>
          <TimeRuler />
          <WordTrack />
          <ClipTrack />
          <Tooltip role="tooltip" style={{ left: atTime(31.45) }}>Convert to audio</Tooltip>
          <Needle $tint="#7f9fe0" style={{ left: atTime(26.41) }} />
          <Needle $tint="#ffffff" style={{ left: atTime(32.52) }}>
            <HoverTime>00:32.54</HoverTime>
          </Needle>
        </Stage>
        <ScrollRow>
          <ScrollPart />
          <ScrollPart />
          <ScrollPart />
        </ScrollRow>
      </Timeline>
    </Shell>
  );
}
